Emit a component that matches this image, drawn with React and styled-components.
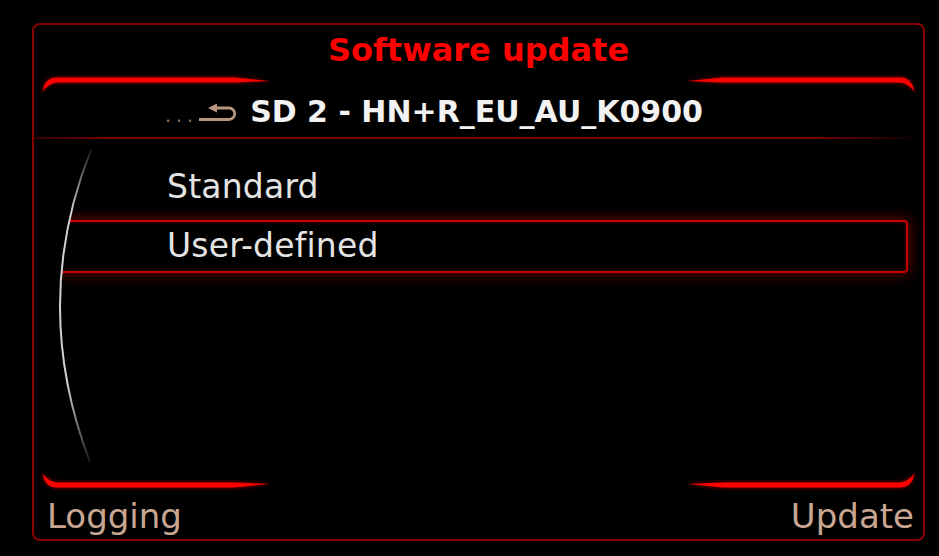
import React from 'react';
import styled, { createGlobalStyle } from 'styled-components';

const GlobalStyle = createGlobalStyle`
  html, body {
    margin: 0;
    padding: 0;
    background: #000;
  }
  body {
    width: 939px;
    height: 556px;
    overflow: hidden;
    font-family: "DejaVu Sans", Verdana, sans-serif;
  }
`;

const Screen = styled.div`
  width: 939px;
  height: 556px;
  padding: 23px 0 0 32px;
  box-sizing: border-box;
  background: #000;
`;

const Frame = styled.div`
  width: 893px;
  height: 518px;
  box-sizing: border-box;
  border: 2px solid #8c0000;
  border-radius: 8px;
  display: flex;
  flex-direction: column;
  overflow: hidden;
`;

const Title = styled.div`
  height: 51px;
  line-height: 51px;
  text-align: center;
  font-size: 32px;
  font-weight: 700;
  color: #ff0000;
`;

const Rule = styled.div`
  height: 18px;
  display: flex;
  justify-content: space-between;
`;

const AccentSvg = styled.svg`
  display: block;
  filter: drop-shadow(0 0 2px rgba(255, 0, 0, 0.6));
  transform: scale(${p => (p.$flipX ? -1 : 1)}, ${p => (p.$flipY ? -1 : 1)});
`;

const HeaderRow = styled.div`
  height: 43px;
  box-sizing: border-box;
  padding-left: 131px;
  display: flex;
  align-items: baseline;
  line-height: 36px;
`;

const Dots = styled.span`
  font-size: 19px;
  letter-spacing: 5px;
  color: #8a7564;
`;

const BackArrow = styled.svg`
  display: block;
  margin-right: 12px;
  align-self: baseline;
`;

const HeaderText = styled.span`
  font-size: 30px;
  font-weight: 700;
  color: #f2f2f2;
`;

const Separator = styled.div`
  height: 2px;
  background: linear-gradient(to right, rgba(120, 0, 0, 0.4), #780000 8%, #780000 88%, rgba(120, 0, 0, 0));
`;

const ListArea = styled.div`
  flex: 1;
  position: relative;
  padding: 22px 15px 0 22px;
  display: flex;
  flex-direction: column;
  gap: 6px;
`;

const Row = styled.div`
  height: 53px;
  box-sizing: border-box;
  padding-left: 109px;
  border: 2px solid ${p => (p.$selected ? '#c40000' : 'transparent')};
  border-radius: 4px;
  box-shadow: ${p => (p.$selected ? '0 0 14px 1px rgba(200, 0, 0, 0.55), inset 0 0 4px rgba(160, 0, 0, 0.5)' : 'none')};
  font-size: 33px;
  letter-spacing: 0.2px;
  line-height: 47px;
  color: #e4e4e4;
`;

const ScrollArc = styled.svg`
  position: absolute;
  top: 0;
  left: 0;
  z-index: 2;
  pointer-events: none;
`;

const SoftKeys = styled.div`
  height: 50px;
  box-sizing: border-box;
  padding: 4px 9px 0 13px;
  display: flex;
  justify-content: space-between;
  font-size: 34px;
  line-height: 46px;
  color: #c9a692;
`;

function Accent({ flipX, flipY }) {
  const id = `fade${flipX ? 'x' : ''}${flipY ? 'y' : ''}`;
  return (
    <AccentSvg width="236" height="18" viewBox="0 0 236 18" $flipX={flipX} $flipY={flipY}>
      <defs>
        <linearGradient id={id} x1="0" y1="0" x2="0" y2="1">
          <stop offset="0" stopColor="#ff0000" />
          <stop offset="0.6" stopColor="#ff0000" />
          <stop offset="1" stopColor="#ff0000" stopOpacity="0.2" />
        </linearGradient>
      </defs>
      <path d="M8 17 C9 10 13 1.5 22 1.5 L200 1.5 L236 5 L200 6.5 L24 6.5 C17 6.5 12 11 8 17 Z" fill={`url(#${id})`} />
    </AccentSvg>
  );
}

export default function App() {
  return (
    <>
      <GlobalStyle />
      <Screen>
        <Frame>
          <Title>Software update</Title>
          <Rule>
            <Accent />
            <Accent flipX />
          </Rule>
          <HeaderRow>
            <Dots>...</Dots>
            <BackArrow width="40" height="18" viewBox="0 0 40 18">
              <path d="M1 15.5 H31 A5.75 5.75 0 0 0 31 4 H18" stroke="#b8957f" strokeWidth="2.8" fill="none" />
              <polygon points="10,4 19,-0.5 19,8.5" fill="#b8957f" />
            </BackArrow>
            <HeaderText>SD 2 - HN+R_EU_AU_K0900</HeaderText>
          </HeaderRow>
          <Separator />
          <ListArea>
            <ScrollArc width="70" height="331" viewBox="0 0 70 331">
              <defs>
                <linearGradient id="arcFade" x1="0" y1="0" x2="0" y2="1">
                  <stop offset="0" stopColor="#ffffff" stopOpacity="0.1" />
                  <stop offset="0.2" stopColor="#e8e8e8" stopOpacity="0.9" />
                  <stop offset="0.75" stopColor="#e8e8e8" stopOpacity="0.9" />
                  <stop offset="1" stopColor="#ffffff" stopOpacity="0.1" />
                </linearGradient>
              </defs>
              <path d="M57 11 Q-4.5 165 56 323 L0 323 L0 11 Z" fill="#000" />
              <path d="M57 11 Q-4.5 165 56 323" stroke="url(#arcFade)" strokeWidth="2" fill="none" />
            </ScrollArc>
            <Row>Standard</Row>
            <Row $selected>User-defined</Row>
          </ListArea>
          <Rule>
            <Accent flipY />
            <Accent flipX flipY />
          </Rule>
          <SoftKeys>
            <span>Logging</span>
            <span>Update</span>
          </SoftKeys>
        </Frame>
      </Screen>
    </>
  );
}
